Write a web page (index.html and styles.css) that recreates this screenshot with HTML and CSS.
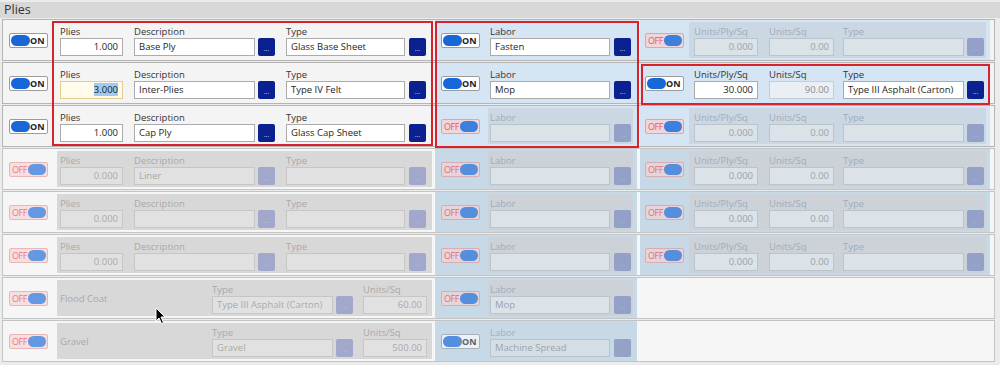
FILE: index.html
```html
<!DOCTYPE html>
<html lang="en">
<head>
    <meta charset="UTF-8">
    <title>Plies</title>
    <link rel="stylesheet" href="styles.css">
</head>
<body>
    <div class="panel">
        <div class="panel-title">Plies</div>

        <div class="rows">
            <!-- Row 1 -->
            <div class="row">
                <div class="toggle-cell"><span class="toggle on"><i class="pill"></i><b>ON</b></span></div>
                <div class="plies">
                    <div class="inner">
                        <div class="field f-plies"><label>Plies</label><div class="input num">1.000</div></div>
                        <div class="field"><label>Description</label><div class="line"><div class="input w-desc">Base Ply</div><span class="btn">...</span></div></div>
                        <div class="field"><label>Type</label><div class="line"><div class="input w-type">Glass Base Sheet</div><span class="btn gap4">...</span></div></div>
                    </div>
                </div>
                <div class="labor">
                    <div class="toggle-cell"><span class="toggle on"><i class="pill"></i><b>ON</b></span></div>
                    <div class="inner">
                        <div class="field"><label>Labor</label><div class="line"><div class="input w-labor">Fasten</div><span class="btn gap4">...</span></div></div>
                    </div>
                </div>
                <div class="units off">
                    <div class="toggle-cell"><span class="toggle"><b>OFF</b><i class="pill"></i></span></div>
                    <div class="inner">
                        <div class="field"><label>Units/Ply/Sq</label><div class="input num w-ups">0.000</div></div>
                        <div class="field"><label>Units/Sq</label><div class="input num w-us">0.00</div></div>
                        <div class="field f-utype"><label>Type</label><div class="line"><div class="input w-utype"></div><span class="btn">...</span></div></div>
                    </div>
                </div>
            </div>

            <!-- Row 2 -->
            <div class="row">
                <div class="toggle-cell"><span class="toggle on"><i class="pill"></i><b>ON</b></span></div>
                <div class="plies">
                    <div class="inner">
                        <div class="field f-plies"><label>Plies</label><div class="input num focus"><span class="sel">3.000</span></div></div>
                        <div class="field"><label>Description</label><div class="line"><div class="input w-desc">Inter-Plies</div><span class="btn">...</span></div></div>
                        <div class="field"><label>Type</label><div class="line"><div class="input w-type">Type IV Felt</div><span class="btn gap4">...</span></div></div>
                    </div>
                </div>
                <div class="labor">
                    <div class="toggle-cell"><span class="toggle on"><i class="pill"></i><b>ON</b></span></div>
                    <div class="inner">
                        <div class="field"><label>Labor</label><div class="line"><div class="input w-labor">Mop</div><span class="btn gap4">...</span></div></div>
                    </div>
                </div>
                <div class="units">
                    <div class="toggle-cell"><span class="toggle on"><i class="pill"></i><b>ON</b></span></div>
                    <div class="inner">
                        <div class="field"><label>Units/Ply/Sq</label><div class="input num w-ups">30.000</div></div>
                        <div class="field"><label>Units/Sq</label><div class="input num w-us readonly">90.00</div></div>
                        <div class="field f-utype"><label>Type</label><div class="line"><div class="input w-utype">Type III Asphalt (Carton)</div><span class="btn">...</span></div></div>
                    </div>
                </div>
            </div>

            <!-- Row 3 -->
            <div class="row">
                <div class="toggle-cell"><span class="toggle on"><i class="pill"></i><b>ON</b></span></div>
                <div class="plies">
                    <div class="inner">
                        <div class="field f-plies"><label>Plies</label><div class="input num">1.000</div></div>
                        <div class="field"><label>Description</label><div class="line"><div class="input w-desc">Cap Ply</div><span class="btn">...</span></div></div>
                        <div class="field"><label>Type</label><div class="line"><div class="input w-type">Glass Cap Sheet</div><span class="btn gap4">...</span></div></div>
                    </div>
                </div>
                <div class="labor off">
                    <div class="toggle-cell"><span class="toggle"><b>OFF</b><i class="pill"></i></span></div>
                    <div class="inner">
                        <div class="field"><label>Labor</label><div class="line"><div class="input w-labor"></div><span class="btn gap4">...</span></div></div>
                    </div>
                </div>
                <div class="units off">
                    <div class="toggle-cell"><span class="toggle"><b>OFF</b><i class="pill"></i></span></div>
                    <div class="inner">
                        <div class="field"><label>Units/Ply/Sq</label><div class="input num w-ups">0.000</div></div>
                        <div class="field"><label>Units/Sq</label><div class="input num w-us">0.00</div></div>
                        <div class="field f-utype"><label>Type</label><div class="line"><div class="input w-utype"></div><span class="btn">...</span></div></div>
                    </div>
                </div>
            </div>

            <!-- Row 4 -->
            <div class="row off">
                <div class="toggle-cell"><span class="toggle"><b>OFF</b><i class="pill"></i></span></div>
                <div class="plies">
                    <div class="inner">
                        <div class="field f-plies"><label>Plies</label><div class="input num">0.000</div></div>
                        <div class="field"><label>Description</label><div class="line"><div class="input w-desc">Liner</div><span class="btn">...</span></div></div>
                        <div class="field"><label>Type</label><div class="line"><div class="input w-type"></div><span class="btn gap4">...</span></div></div>
                    </div>
                </div>
                <div class="labor off">
                    <div class="toggle-cell"><span class="toggle"><b>OFF</b><i class="pill"></i></span></div>
                    <div class="inner">
                        <div class="field"><label>Labor</label><div class="line"><div class="input w-labor"></div><span class="btn gap4">...</span></div></div>
                    </div>
                </div>
                <div class="units off">
                    <div class="toggle-cell"><span class="toggle"><b>OFF</b><i class="pill"></i></span></div>
                    <div class="inner">
                        <div class="field"><label>Units/Ply/Sq</label><div class="input num w-ups">0.000</div></div>
                        <div class="field"><label>Units/Sq</label><div class="input num w-us">0.00</div></div>
                        <div class="field f-utype"><label>Type</label><div class="line"><div class="input w-utype"></div><span class="btn">...</span></div></div>
                    </div>
                </div>
            </div>

            <!-- Row 5 -->
            <div class="row off">
                <div class="toggle-cell"><span class="toggle"><b>OFF</b><i class="pill"></i></span></div>
                <div class="plies">
                    <div class="inner">
                        <div class="field f-plies"><label>Plies</label><div class="input num">0.000</div></div>
                        <div class="field"><label>Description</label><div class="line"><div class="input w-desc"></div><span class="btn">...</span></div></div>
                        <div class="field"><label>Type</label><div class="line"><div class="input w-type"></div><span class="btn gap4">...</span></div></div>
                    </div>
                </div>
                <div class="labor off">
                    <div class="toggle-cell"><span class="toggle"><b>OFF</b><i class="pill"></i></span></div>
                    <div class="inner">
                        <div class="field"><label>Labor</label><div class="line"><div class="input w-labor"></div><span class="btn gap4">...</span></div></div>
                    </div>
                </div>
                <div class="units off">
                    <div class="toggle-cell"><span class="toggle"><b>OFF</b><i class="pill"></i></span></div>
                    <div class="inner">
                        <div class="field"><label>Units/Ply/Sq</label><div class="input num w-ups">0.000</div></div>
                        <div class="field"><label>Units/Sq</label><div class="input num w-us">0.00</div></div>
                        <div class="field f-utype"><label>Type</label><div class="line"><div class="input w-utype"></div><span class="btn">...</span></div></div>
                    </div>
                </div>
            </div>

            <!-- Row 6 -->
            <div class="row off">
                <div class="toggle-cell"><span class="toggle"><b>OFF</b><i class="pill"></i></span></div>
                <div class="plies">
                    <div class="inner">
                        <div class="field f-plies"><label>Plies</label><div class="input num">0.000</div></div>
                        <div class="field"><label>Description</label><div class="line"><div class="input w-desc"></div><span class="btn">...</span></div></div>
                        <div class="field"><label>Type</label><div class="line"><div class="input w-type"></div><span class="btn gap4">...</span></div></div>
                    </div>
                </div>
                <div class="labor off">
                    <div class="toggle-cell"><span class="toggle"><b>OFF</b><i class="pill"></i></span></div>
                    <div class="inner">
                        <div class="field"><label>Labor</label><div class="line"><div class="input w-labor"></div><span class="btn gap4">...</span></div></div>
                    </div>
                </div>
                <div class="units off">
                    <div class="toggle-cell"><span class="toggle"><b>OFF</b><i class="pill"></i></span></div>
                    <div class="inner">
                        <div class="field"><label>Units/Ply/Sq</label><div class="input num w-ups">0.000</div></div>
                        <div class="field"><label>Units/Sq</label><div class="input num w-us">0.00</div></div>
                        <div class="field f-utype"><label>Type</label><div class="line"><div class="input w-utype"></div><span class="btn">...</span></div></div>
                    </div>
                </div>
            </div>

            <!-- Row 7 -->
            <div class="row off">
                <div class="toggle-cell"><span class="toggle"><b>OFF</b><i class="pill"></i></span></div>
                <div class="plies">
                    <div class="inner">
                        <div class="coat-name">Flood Coat</div>
                        <div class="field"><label>Type</label><div class="line"><div class="input w-desc">Type III Asphalt (Carton)</div><span class="btn">...</span></div></div>
                        <div class="field f-coat-us"><label>Units/Sq</label><div class="input num w-ups">60.00</div></div>
                    </div>
                </div>
                <div class="labor off">
                    <div class="toggle-cell"><span class="toggle"><b>OFF</b><i class="pill"></i></span></div>
                    <div class="inner">
                        <div class="field"><label>Labor</label><div class="line"><div class="input w-labor">Mop</div><span class="btn gap4">...</span></div></div>
                    </div>
                </div>
            </div>

            <!-- Row 8 -->
            <div class="row off">
                <div class="toggle-cell"><span class="toggle"><b>OFF</b><i class="pill"></i></span></div>
                <div class="plies">
                    <div class="inner">
                        <div class="coat-name">Gravel</div>
                        <div class="field"><label>Type</label><div class="line"><div class="input w-desc">Gravel</div><span class="btn">...</span></div></div>
                        <div class="field f-coat-us"><label>Units/Sq</label><div class="input num w-ups">500.00</div></div>
                    </div>
                </div>
                <div class="labor">
                    <div class="toggle-cell"><span class="toggle on"><i class="pill"></i><b>ON</b></span></div>
                    <div class="inner">
                        <div class="field"><label>Labor</label><div class="line"><div class="input w-labor">Machine Spread</div><span class="btn gap4">...</span></div></div>
                    </div>
                </div>
            </div>

            <!-- Highlight boxes -->
            <div class="mark mark-plies"></div>
            <div class="mark mark-labor"></div>
            <div class="mark mark-units"></div>

            <svg class="cursor" width="12" height="18" viewBox="0 0 12 18">
                <path d="M1 1 L1 14 L4 11 L6.5 16.5 L8.5 15.5 L6 10 L10 10 Z" fill="#000" stroke="#fff" stroke-width="1"/>
            </svg>
        </div>
    </div>
</body>
</html>
```

FILE: styles.css
```css
:root {
    --row-bg: #f4f4f4;
    --border: #b5b5b5;
    --blue-bg: #d5e5f3;
    --navy: #0c2190;
    --text: #1e1e1e;
    --label: #333;
    --red: #d8232c;
}

* {
    box-sizing: border-box;
}

body {
    margin: 0;
    background-color: #ececec;
    font-family: 'Open Sans', 'Noto Sans', sans-serif;
    color: var(--text);
}

.panel {
    width: 1000px;
    height: 365px;
    padding-top: 2px;
}

.panel-title {
    height: 16px;
    margin: 0 0 1px 0;
    padding-left: 4px;
    background-color: #d8d8d8;
    font-size: 12.5px;
    line-height: 16px;
    color: #333;
}

.rows {
    position: relative;
}

.row {
    display: flex;
    height: 42px;
    width: 993px;
    margin: 0 0 1px 2px;
    border: 1px solid var(--border);
    background-color: var(--row-bg);
}

.toggle-cell {
    width: 52px;
    flex: none;
    display: flex;
    align-items: center;
    padding-left: 6px;
}

/* toggle switch */
.toggle {
    display: flex;
    align-items: center;
    justify-content: space-between;
    flex: none;
    width: 39px;
    height: 15px;
    padding: 0 3px 0 1px;
    border: 1px solid #9c9c9c;
    border-radius: 2px;
    background-color: white;
    font-size: 9px;
    line-height: 13px;
}

.toggle .pill {
    display: block;
    flex: none;
    width: 19px;
    height: 11px;
    border-radius: 6px;
    background-color: #1767d9;
}

.toggle b {
    font-weight: bold;
    color: #222;
}

.toggle:not(.on) {
    padding: 0 1px 0 2px;
    background-color: #fad2d2;
    border-color: #d99a9a;
}

.toggle:not(.on) .pill {
    width: 18px;
}

.toggle:not(.on) b {
    font-weight: normal;
    color: #e0393f;
    letter-spacing: -0.4px;
}

/* plies section */
.plies {
    width: 378px;
    flex: none;
    padding: 2px 1px 2px 2px;
}

.inner {
    display: flex;
    height: 100%;
    padding: 3px 0 0 3px;
    gap: 11px;
}

.field {
    display: flex;
    flex-direction: column;
}

.field label {
    display: block;
    height: 13px;
    font-size: 9.5px;
    line-height: 13px;
    color: var(--label);
}

.line {
    display: flex;
}

.input {
    height: 18px;
    border: 1px solid #ababab;
    background-color: white;
    padding: 0 4px;
    font-size: 9.5px;
    line-height: 16px;
    white-space: nowrap;
    overflow: hidden;
}

.input.num {
    text-align: right;
}

.f-plies .input {
    width: 63px;
}

.w-desc {
    width: 121px;
}

.w-type {
    width: 119px;
}

.w-labor {
    width: 120px;
}

.w-ups {
    width: 64px;
}

.w-us {
    width: 65px;
}

.w-utype {
    width: 121px;
}

.input.focus {
    background-color: #fffbea;
    border-color: #e2cf8f;
}

.sel {
    background-color: #9dcbf2;
}

.input.readonly {
    background-color: #e9eff5;
    border-color: #c3cdd6;
    color: #8e8e8e;
}

.btn {
    width: 17px;
    height: 18px;
    margin-left: 3px;
    border-radius: 2px;
    background-color: var(--navy);
    color: white;
    font-family: 'DejaVu Sans', sans-serif;
    font-size: 6px;
    line-height: 22px;
    text-align: center;
    overflow: hidden;
}

.btn.gap4 {
    margin-left: 4px;
}

/* labor + units sections */
.labor {
    display: flex;
    width: 202px;
    flex: none;
    margin-left: 2px;
    background-color: var(--blue-bg);
}

.labor .toggle-cell {
    width: 53px;
}

.labor .inner {
    padding: 3px 0 0 2px;
    margin: 2px 4px 2px 0;
    height: auto;
    flex: 1;
}

.units {
    display: flex;
    width: 350px;
    flex: none;
    margin-left: 3px;
    background-color: var(--blue-bg);
}

.units .toggle-cell {
    width: 49px;
    padding-left: 5px;
}

.units .inner {
    flex: 1;
    height: auto;
    margin: 2px 4px 2px 0;
    padding: 3px 0 0 5px;
}

.units .f-utype {
    margin-left: -2px;
}

/* section switched off inside an active row */
.labor.off .inner,
.units.off .inner {
    background-color: #cbd7e2;
}

.off .field label {
    color: #9eadbb;
}

.off .input {
    background-color: #dbe2e8;
    border-color: #b9c4cd;
    color: #9aa4ad;
}

.off .btn {
    background-color: #93a0c8;
    color: #b9c1dc;
}

.labor.off .toggle,
.units.off .toggle {
    opacity: 0.8;
}

/* whole row switched off */
.row.off {
    background-color: #f6f6f6;
    border-color: #c4c4c4;
}

.row.off .toggle {
    opacity: 0.65;
}

.row.off .plies .inner {
    background-color: #d8d8d8;
}

.row.off .plies label,
.row.off .coat-name {
    color: #a9a9a9;
}

.row.off .plies .input {
    background-color: #e1e1e1;
    border-color: #c6c6c6;
    color: #aaa;
}

.row.off .plies .btn {
    background-color: #a2a7cc;
    color: #c4c7dc;
}

.row.off .labor,
.row.off .units {
    background-color: #c7d8e6;
}

.row.off .labor .inner,
.row.off .units .inner {
    background-color: #ccd2d8;
}

.row.off .labor:not(.off) .inner {
    background-color: #c7d8e6;
}

.row.off .labor:not(.off) label {
    color: #a3b0bc;
}

.row.off .labor:not(.off) .input {
    background-color: #d6dee5;
    border-color: #b9c4cd;
    color: #9aa4ad;
}

.row.off .labor:not(.off) .btn {
    background-color: #96a1c6;
    color: #96a1c6;
}

/* coat rows */
.coat-name {
    width: 141px;
    flex: none;
    font-size: 9.5px;
    line-height: 13px;
    padding-top: 9px;
}

.f-coat-us {
    margin-left: -1px;
}

/* red highlight boxes */
.mark {
    position: absolute;
    border: 2px solid var(--red);
    pointer-events: none;
}

.mark-plies {
    left: 52px;
    top: 2px;
    width: 381px;
    height: 125px;
}

.mark-labor {
    left: 435px;
    top: 2px;
    width: 204px;
    height: 127px;
}

.mark-units {
    left: 641px;
    top: 45px;
    width: 349px;
    height: 41px;
}

.cursor {
    position: absolute;
    left: 155px;
    top: 288px;
}
```
